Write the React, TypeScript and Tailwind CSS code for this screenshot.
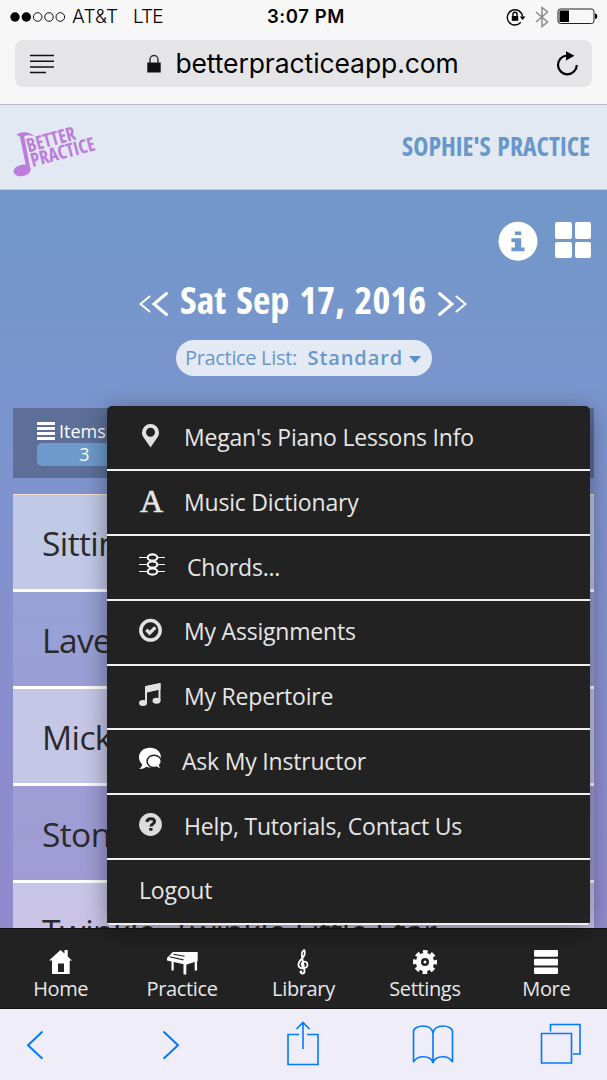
import type { ReactNode } from "react"

const menuItems = [
  { id: "info", label: "Megan's Piano Lessons Info" },
  { id: "dictionary", label: "Music Dictionary" },
  { id: "chords", label: "Chords..." },
  { id: "assignments", label: "My Assignments" },
  { id: "repertoire", label: "My Repertoire" },
  { id: "ask", label: "Ask My Instructor" },
  { id: "help", label: "Help, Tutorials, Contact Us" },
  { id: "logout", label: "Logout" }
]

const songs = [
  { title: "Sitting", bg: "bg-white/50" },
  { title: "Laven", bg: "bg-white/15" },
  { title: "Mickey", bg: "bg-white/50" },
  { title: "Stone", bg: "bg-white/15" },
  { title: "Twinkle, Twinkle Little Star", bg: "bg-white/50" }
]

const menuIcons: Record<string, ReactNode> = {
  info: (
    <path fill="#e2e2e2" fillRule="evenodd" d="M13.500 1a8.500 8.500 0 0 1 8.500 8.500c0 2-.5 3-1.300 4.500L13.500 24.500 6.300 14C5.500 12.500 5 11.500 5 9.500A8.500 8.500 0 0 1 13.500 1zM13.500 4.800a4.500 4.500 0 1 0 0 9 4.500 4.500 0 0 0 0-9z" />
  ),
  chords: (
    <g fill="none" stroke="#f5f5f5">
      <path strokeWidth="1" d="M2 4.500h26M2 11.500h26M2 18.500h26" />
      <ellipse cx="15.500" cy="4.500" rx="4.800" ry="3.100" strokeWidth="2.200" fill="#222" />
      <ellipse cx="15.500" cy="11.500" rx="4.800" ry="3.100" strokeWidth="2.200" fill="#222" />
      <ellipse cx="15.500" cy="18.500" rx="4.800" ry="3.100" strokeWidth="2.200" fill="#222" />
    </g>
  ),
  assignments: (
    <g fill="none" stroke="#e2e2e2">
      <circle cx="13.500" cy="12.300" r="9.700" strokeWidth="3.500" />
      <path d="M9.300 11.800l3.300 3.300 5.700-5.700" strokeWidth="3.400" />
    </g>
  ),
  repertoire: (
    <g fill="#e2e2e2">
      <path d="M8 4.300L23.500 1v18h-2V7.700L10 10.500v11H8z" />
      <path d="M8 4.300L23.500 1v6.200L8 10.800z" />
      <ellipse cx="6" cy="21" rx="4" ry="3" />
      <ellipse cx="19.500" cy="18.800" rx="4" ry="3" />
    </g>
  ),
  ask: (
    <g fill="#fff">
      <path d="M13 .8C6.500.8 2 5 2 10.300c0 3 1.200 5.300 3.200 7-.3 2-1.300 3.500-3 4.700 3 .2 5.200-.7 6.800-2.200 1.200.4 2.500.6 4 .6 6.500 0 10.900-4.500 10.900-10.100S19.500.8 13 .8z" />
      <path stroke="#222" strokeWidth="1.500" d="M17 8.200c-4 0-6.900 2.700-6.900 6.100 0 3.500 3 6.200 6.900 6.200.9 0 1.700-.1 2.300-.4 1.300 1.300 2.800 1.800 4.900 1.700v-1.200c-1-.7-1.400-1.500-1.500-2.500 1-1 1.600-2.400 1.600-3.800 0-3.400-3.300-6.100-7.300-6.100z" />
    </g>
  ),
  help: (
    <g>
      <circle cx="13.500" cy="12.500" r="11.400" fill="#dcdcdc" />
      <path d="M9.900 10c.3-2.200 1.700-3.300 3.800-3.300 2.300 0 3.800 1.200 3.800 2.900 0 2.400-3.600 2.400-3.600 5" fill="none" stroke="#222" strokeWidth="3" />
      <path d="M12.200 16h3.300v2.700h-3.300z" fill="#222" />
    </g>
  )
}

const navIcons: Record<string, ReactNode> = {
  Home: (
    <path fill="#fff" fillRule="evenodd" d="M19.500 4l4 3.500V4h3.200v6.500L31 14.500H28.700V28H11V14.500H8L19.500 4zM17 17.500V26h6v-8.500z" />
  ),
  Practice: (
    <g fill="#fff">
      <path d="M5 12l5.700-6h25v9L24 18.800 5 14.500z" />
      <path d="M9.500 14h2.200v10.500H9.500zM21.500 17h2.800v11.500h-2.800zM32.700 14h2.400v10.500h-2.400z" />
      <path d="M7.500 10.700l14 3.200M11.500 8.200l11 2" stroke="#222" strokeWidth="1.100" fill="none" />
    </g>
  ),
  Library: (
    <g fill="none" stroke="#fff" strokeWidth="1.800">
      <path d="M17.500 25.500c0 3 4.500 2.700 4-1L18.800 9.500c-.5-3 1.500-5.500 2.700-5.200 1.300 3.700-.5 6.200-2.500 8.200-2.500 2.500-4 4-3.500 7 .8 4 8.500 3.500 9-.5.3-4.500-6-4.200-5.800-.3.1 1.200.7 1.800 1.500 2.200" />
      <circle cx="18" cy="26" r="1.400" fill="#fff" stroke="none" />
    </g>
  ),
  Settings: (
    <g fill="none" stroke="#fff">
      <circle cx="20" cy="16" r="6.600" strokeWidth="5.200" />
      <circle cx="20" cy="16" r="10.200" strokeWidth="3.600" strokeDasharray="4.600 3.411" strokeDashoffset="2.300" />
      <circle cx="20" cy="16" r="1.500" fill="#fff" stroke="none" />
    </g>
  ),
  More: (
    <g fill="#fff">
      <rect x="8" y="4" width="24" height="6.700" rx="1" />
      <rect x="8" y="12.700" width="24" height="6.700" rx="1" />
      <rect x="8" y="21.400" width="24" height="6.700" rx="1" />
    </g>
  )
}

function StatusBar() {
  return (
    <div className="flex h-[33px] items-center justify-between pl-[10px] pr-[9px] font-['Inter','Liberation_Sans',sans-serif] text-[18px] leading-[33px]">
      <div className="flex w-[190px] items-center">
        <svg width="56" height="12" viewBox="0 0 56 12">
          <circle cx="5" cy="6" r="4.700" />
          <circle cx="16.300" cy="6" r="4.700" />
          <g fill="none" stroke="#111" strokeWidth="1">
            <circle cx="27.700" cy="6" r="4.300" />
            <circle cx="39" cy="6" r="4.300" />
            <circle cx="50.300" cy="6" r="4.300" />
          </g>
        </svg>
        <span className="ml-[6px] w-[61px] text-[19px] font-[350] tracking-[0.2px]">AT&amp;T</span>
        <span className="text-[19px] font-[350] tracking-[-0.9px]">LTE</span>
      </div>
      <span className="pl-[4px] text-[18.5px] font-semibold tracking-[0.6px]">3:07 PM</span>
      <div className="flex w-[190px] items-center justify-end">
        <svg width="20" height="20" viewBox="0 0 20 20" fill="none" stroke="#000" strokeWidth="1.400">
          <path d="M14.800 15.200A7.600 7.600 0 1 1 16.500 9.500" />
          <path d="M13.800 9.500h5.700l-2.900 3.500z" fill="#000" stroke="none" />
          <path d="M5.800 9h6.400v4.800H5.800z" fill="#000" stroke="none" />
          <path d="M7 9V7.200a2 2 0 0 1 4 0V9" />
        </svg>
        <svg className="ml-[9px]" width="14" height="22" viewBox="0 0 14 22" fill="none" stroke="#8c8c8c" strokeWidth="1.500">
          <path d="M1 6l11.500 10L7 20.500V1.500L12.500 6 1 16" />
        </svg>
        <svg className="ml-[8px]" width="41" height="17" viewBox="0 0 41 17">
          <rect x="1" y="1" width="36" height="14.500" rx="2.500" fill="none" stroke="#222" strokeWidth="1" />
          <path d="M2.500 2.500h9.500v11.500H2.500z" />
          <path d="M38 5.500c3 0 3 5.500 0 5.500z" />
        </svg>
      </div>
    </div>
  )
}

function AddressBar() {
  return (
    <div className="mx-[15px] mt-[7px] flex h-[47px] items-center justify-between rounded-[8px] bg-[#e5e5e7] pl-[15px] pr-[13px]">
      <svg width="24" height="20" viewBox="0 0 24 20" stroke="#111" strokeWidth="1.600">
        <path d="M0 1.500h24M0 7.300h24M0 13h24M0 18.500h16" />
      </svg>
      <div className="flex items-center pr-[3px] font-['Inter','Liberation_Sans',sans-serif]">
        <svg className="mr-[14px]" width="14" height="20" viewBox="0 0 14 20">
          <path d="M.3 8.500h13.400v10H.3z" fill="#111" />
          <path d="M3 9V5.500a4 4 0 0 1 8 0V9" fill="none" stroke="#333" strokeWidth="1.500" />
        </svg>
        <span className="text-[26.5px] font-[370] leading-[45px] tracking-[-0.1px]">betterpracticeapp.com</span>
      </div>
      <svg width="24" height="26" viewBox="0 0 24 26">
        <path d="M12 4.500A9.400 9.400 0 1 0 21.800 14" fill="none" stroke="#000" strokeWidth="2.200" />
        <path d="M11 .2l8.500 4.600-8.500 4.800z" />
      </svg>
    </div>
  )
}

function Logo() {
  return (
    <svg width="86" height="60" viewBox="0 0 86 60" fill="#bd7edb">
      <path d="M4 17c5-2.500 13-2.500 17 2.500-4.500-1.700-8.500-1.700-9.800.3L17.500 52h-4L7 20c-.5-1.200-1.500-1.500-2.500-1.200z" />
      <ellipse cx="9" cy="53.500" rx="8.700" ry="5.700" transform="rotate(-12 9 53)" />
      <g fontSize="19" className="font-bold font-stretch-condensed">
        <text transform="translate(15.500 35.500) rotate(-15.500)" textLength="50" lengthAdjust="spacingAndGlyphs">BETTER</text>
        <text transform="translate(19.500 50) rotate(-15)" textLength="66" lengthAdjust="spacingAndGlyphs">PRACTICE</text>
      </g>
    </svg>
  )
}

function DateHeader() {
  return (
    <>
      <div className="flex h-[86px] items-start justify-end gap-[17px] pr-4 pt-[31px]">
        <svg width="40" height="41" viewBox="0 0 40 41">
          <circle cx="20" cy="20.200" r="19.500" fill="#fff" />
          <path d="M16.900 10.500h6.300v3.500h-6.300zM13.400 17.200h9.800v9.300h3.300v3.700H13.400v-3.700h3.500v-5.600h-3.500z" fill="#6c98cc" />
        </svg>
        <div className="mt-px grid h-9 w-9 grid-cols-2 gap-[3px]">
          <i className="rounded-[2px] bg-white" />
          <i className="rounded-[2px] bg-white" />
          <i className="rounded-[2px] bg-white" />
          <i className="rounded-[2px] bg-white" />
        </div>
      </div>
      <div className="flex h-[50px] items-center justify-center pr-px">
        <svg className="mt-[5px]" width="30" height="26" viewBox="0 0 30 26" fill="none" stroke="#fff" strokeLinecap="round">
          <path d="M10.500 5.500L1.500 13l9 7.500" strokeWidth="2" />
          <path d="M27.500 2.500L15 13l12.500 10.500" strokeWidth="3" />
        </svg>
        <svg width="268" height="54" viewBox="0 0 268 54" fill="#fff">
          <text x="11" y="40.300" fontSize="37" wordSpacing="3" textLength="246" lengthAdjust="spacingAndGlyphs" className="font-bold font-stretch-condensed">Sat Sep 17, 2016</text>
        </svg>
        <svg className="mt-[5px]" width="30" height="26" viewBox="0 0 30 26" fill="none" stroke="#fff" strokeLinecap="round">
          <path d="M19.500 5.500l9 7.500-9 7.500" strokeWidth="2" />
          <path d="M2.500 2.500L15 13 2.500 23.500" strokeWidth="3" />
        </svg>
      </div>
      <div className="mx-auto mt-[14px] flex h-9 w-[256px] items-center rounded-full bg-[#e3eaf4] pb-px pl-[9.5px] text-[20px] text-[#6797cb]">
        <span className="w-[122.5px] whitespace-nowrap tracking-[-0.33px]">Practice List:</span>
        <span className="font-semibold tracking-[0.9px]">Standard</span>
        <i className="ml-[6px] mt-[4px] border-x-[6.5px] border-t-[7px] border-x-transparent border-t-[#5b90cc]" />
      </div>
    </>
  )
}

function SongList() {
  return (
    <div className="mx-[13px] mt-4 h-[434px] overflow-hidden border-t border-[#f6e3d5]">
      {songs.map((song) => (
        <div key={song.title} className={`flex h-[97px] items-center border-b-[3px] border-white pl-[29px] pt-[3px] text-[33.5px] tracking-[-0.6px] text-[#2a2a2a] ${song.bg}`}>
          <span className="whitespace-nowrap">{song.title}</span>
        </div>
      ))}
    </div>
  )
}

function MoreMenu() {
  return (
    <div className="absolute left-[107px] top-[406px] w-[483px] overflow-hidden rounded-[5px] rounded-b-[3px] bg-[#222] pt-[0.5px] shadow-[0_5px_24px_rgba(0,0,0,0.4)]">
      {menuItems.map((item) => (
        <div key={item.id} className="flex h-[64.78px] items-center border-b-2 border-[#f0f0f0] pb-px pl-[30px] text-[23px] text-[#e6e6e6]">
          {item.id === "dictionary" && (
            <span className="ml-[3px] w-[44px] pb-[2px] font-['Liberation_Serif',serif] text-[32px] tracking-[-1px] [-webkit-text-stroke:0.6px_#e8e8e8]">A</span>
          )}
          {item.id !== "dictionary" && item.id !== "logout" && (
            <svg className={item.id === "chords" ? "mr-[18px] shrink-0" : item.id === "ask" ? "mr-[13px] shrink-0" : "mr-[15px] shrink-0"} width="32" height="28" viewBox="0 0 32 28">
              {menuIcons[item.id]}
            </svg>
          )}
          <span className={item.id === "logout" ? "ml-[2px] tracking-[-0.2px]" : "tracking-[-0.2px]"}>{item.label}</span>
        </div>
      ))}
    </div>
  )
}

function BottomNav() {
  return (
    <nav className="grid h-[81px] shrink-0 grid-cols-5 border-y border-y-[#111] bg-[#222] pt-[17px]">
      {Object.keys(navIcons).map((name) => (
        <div key={name} className="flex flex-col items-center text-[20px] leading-[26px] tracking-[-0.35px] text-[#e8e8e8]">
          <svg width="40" height="32" viewBox="0 0 40 32">{navIcons[name]}</svg>
          <span className="-mt-[2px]">{name}</span>
        </div>
      ))}
    </nav>
  )
}

function BrowserToolbar() {
  return (
    <div className="flex h-[71px] shrink-0 items-center bg-[#efedf8] pl-[26px]">
      <svg width="18" height="30" viewBox="0 0 18 30" fill="none" stroke="#007aff" strokeWidth="2">
        <path d="M16.500 1.500L2 15.200l14.500 13.500" />
      </svg>
      <svg className="ml-[118px]" width="18" height="30" viewBox="0 0 18 30" fill="none" stroke="#007aff" strokeWidth="2">
        <path d="M1.500 1.500L16 15.200 1.500 28.700" />
      </svg>
      <svg className="mb-[4px] ml-[107px]" width="32" height="46" viewBox="0 0 32 46" fill="none" stroke="#007aff" strokeWidth="1.600">
        <path d="M12 14.500H1v30h30v-30H20M16 29V2.500M9.500 9L16 2.500 22.500 9" />
      </svg>
      <svg className="ml-[93px]" width="42" height="42" viewBox="0 0 42 42" fill="none" stroke="#007aff" strokeWidth="1.600">
        <path d="M21 9C20 4 15.500 2 11 2S1.500 4 1.500 7.500V38c2-3.700 5.500-5.200 9.500-5.200s9 1.500 10 6.200c1-4.700 6-6.200 10-6.200s7.500 1.500 9.500 5.200V7.500C40.500 4 35.500 2 31 2s-9 2-10 7zv30" />
      </svg>
      <svg className="mb-px ml-[86px]" width="42" height="42" viewBox="0 0 42 42" fill="none" stroke="#007aff" strokeWidth="1.600">
        <path d="M1.500 10.500h30v29.500h-30zM10.500 8.500V1.500H40v29.500h-7" />
      </svg>
    </div>
  )
}

export default function App() {
  return (
    <div className="relative flex h-[1080px] w-[607px] flex-col overflow-hidden bg-[#f7f7f7] font-['Open_Sans','Noto_Sans',sans-serif] text-black">
      <div className="h-[104px] shrink-0">
        <StatusBar />
        <AddressBar />
      </div>
      <header className="flex h-[86px] shrink-0 items-center justify-between border-b border-t border-b-[#b9cce5] border-t-[#b3bcc4] bg-[#e2e9f3] pl-[13px] pr-[15px]">
        <Logo />
        <svg width="192" height="40" viewBox="0 0 192 40" fill="#6797cb">
          <text x="2" y="28.500" fontSize="26" wordSpacing="2" textLength="188" lengthAdjust="spacingAndGlyphs" className="font-bold font-stretch-condensed">SOPHIE'S PRACTICE</text>
        </svg>
      </header>
      <main className="h-[738px] shrink-0 bg-linear-to-b from-[#7197c8] via-[#7b95ce] via-30% to-[#9389cd]">
        <DateHeader />
        <div className="mx-[13px] mt-8 h-[70px] bg-[#5d6f98] pl-6 pt-[12px] text-white">
          <div className="flex h-[23px] items-center pb-px text-[18px]">
            <div className="mr-[4px] flex w-[18px] flex-col gap-[1.5px]">
              <i className="h-[3.3px] bg-white" />
              <i className="h-[3.3px] bg-white" />
              <i className="h-[3.3px] bg-white" />
              <i className="h-[3.3px] bg-white" />
            </div>
            Items
          </div>
          <div className="flex h-[23px] w-[95px] items-center justify-center rounded-[5px] bg-[#6d9aca] text-[18px]">3</div>
        </div>
        <SongList />
      </main>
      <BottomNav />
      <BrowserToolbar />
      <MoreMenu />
    </div>
  )
}
